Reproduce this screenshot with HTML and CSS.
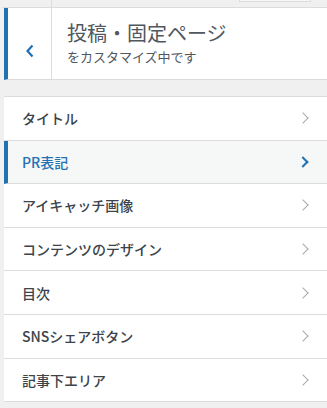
FILE: index.html
```html
<!DOCTYPE html>
<html lang="ja">
  <head>
    <title>カスタマイズ</title>
    <meta charset="UTF-8">
    <link rel="stylesheet" href="styles.css">
  </head>
  <body>
    <div class="topbar">
      <div class="topbar-left"></div>
      <div class="topbar-btn"></div>
    </div>
    <div class="panel-head">
      <div class="back">
        <svg width="10" height="14" viewBox="0 0 10 14"><path d="M7.5 1.5 L2.5 7 L7.5 12.5" fill="none" stroke="#2271b1" stroke-width="2.2"/></svg>
      </div>
      <div class="head-text">
        <p class="head-title">投稿・固定ページ</p>
        <p class="head-sub">をカスタマイズ中です</p>
      </div>
    </div>
    <ul class="menu">
      <li class="item">タイトル<span class="chev"></span></li>
      <li class="item active">PR表記<span class="chev"></span></li>
      <li class="item">アイキャッチ画像<span class="chev"></span></li>
      <li class="item">コンテンツのデザイン<span class="chev"></span></li>
      <li class="item">目次<span class="chev"></span></li>
      <li class="item">SNSシェアボタン<span class="chev"></span></li>
      <li class="item">記事下エリア<span class="chev"></span></li>
    </ul>
  </body>
</html>
```
FILE: styles.css
```css
* { box-sizing: border-box; }
body
{
    margin: 0;
    background-color: #f0f0f1;
    font-family: "Noto Sans CJK JP", "Noto Sans", sans-serif;
    color: #3c434a;
}
.topbar
{
    height: 8px;
    display: flex;
    border-left: 4px solid #f0f0f1;
    border-bottom: 1px solid #dcdcde;
}
.topbar-left { width: 48px; border-right: 1px solid #dcdcde; }
.topbar-btn
{
    margin-left: auto;
    margin-right: 16px;
    width: 72px;
    height: 2px;
    border: 1px solid #dcdcde;
    border-top: 0;
    background: #f6f7f7;
}
.panel-head
{
    display: flex;
    height: 72px;
    margin-left: 4px;
    background: #fff;
    border-left: 4px solid #2271b1;
    border-bottom: 1px solid #dcdcde;
}
.back
{
    width: 44px;
    border-right: 1px solid #dcdcde;
    display: flex;
    align-items: center;
    justify-content: center;
    padding-top: 14px;
}
.head-text { padding: 11px 0 0 15px; }
.head-title
{
    margin: 0;
    font-size: 20px;
    line-height: 28px;
    color: #50575e;
}
.head-sub
{
    margin: 0;
    font-size: 13px;
    line-height: 20px;
    color: #50575e;
}
.menu
{
    list-style: none;
    margin: 16px 0 0 4px;
    padding: 0;
    border-top: 1px solid #dcdcde;
}
.item
{
    height: 43.6px;
    display: flex;
    align-items: center;
    padding: 0 18px 0 18px;
    background: #fff;
    border-bottom: 1px solid #dcdcde;
    font-size: 14px;
    font-weight: 500;
    color: #3c434a;
}
.item.active
{
    background: #f6f7f7;
    border-left: 4px solid #2271b1;
    padding-left: 14px;
    color: #2271b1;
}
.chev
{
    margin-left: auto;
    width: 8px;
    height: 8px;
    border-top: 1.5px solid #a7aaad;
    border-right: 1.5px solid #a7aaad;
    transform: rotate(45deg);
    margin-right: 2px;
}
.active .chev { border-color: #2271b1; border-width: 2px; }
```
